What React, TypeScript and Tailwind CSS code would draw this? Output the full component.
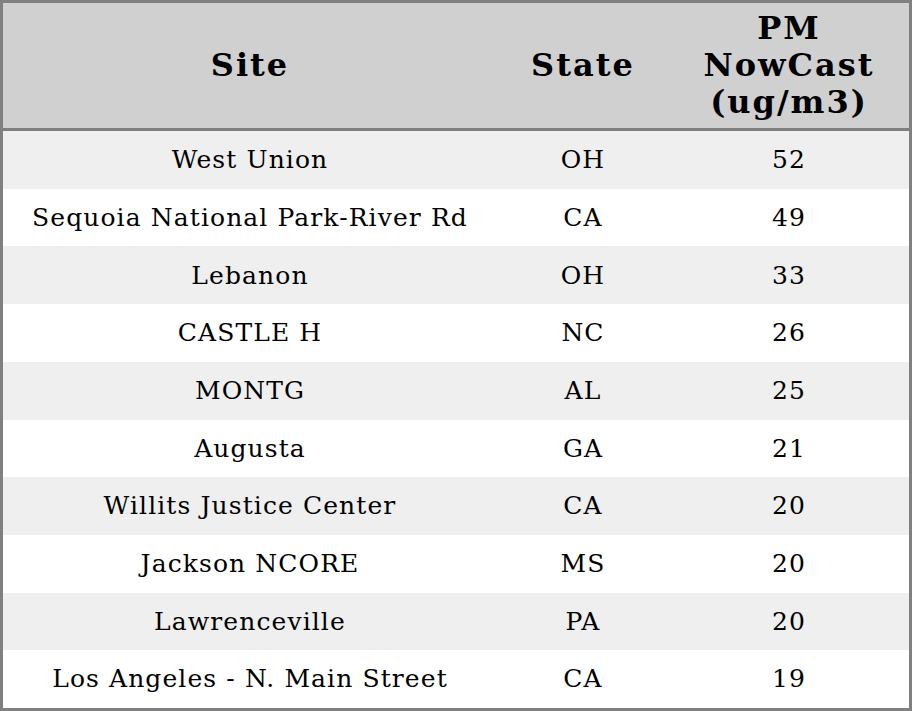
const rows: [string, string, string][] = [
  ['West Union', 'OH', '52'],
  ['Sequoia National Park-River Rd', 'CA', '49'],
  ['Lebanon', 'OH', '33'],
  ['CASTLE H', 'NC', '26'],
  ['MONTG', 'AL', '25'],
  ['Augusta', 'GA', '21'],
  ['Willits Justice Center', 'CA', '20'],
  ['Jackson NCORE', 'MS', '20'],
  ['Lawrenceville', 'PA', '20'],
  ['Los Angeles - N. Main Street', 'CA', '19'],
];

export default function App() {
  return (
    <div
      className="w-[912px] h-[711px] flex flex-col border-[3px] border-[#808080] bg-white text-black"
      style={{ fontFamily: '"DejaVu Serif", serif' }}
    >
      <div className="h-[128px] shrink-0 grid grid-cols-[494px_172px_1fr] items-center bg-[#d0d0d0] border-b-[3px] border-[#808080] text-[32px] font-bold leading-[37px] tracking-[2px] text-center">
        <div>Site</div>
        <div>State</div>
        <div>
          PM
          <br />
          NowCast
          <br />
          (ug/m3)
        </div>
      </div>
      {rows.map(([site, state, val], i) => (
        <div
          key={i}
          className={`flex-1 grid grid-cols-[494px_172px_1fr] items-center text-center text-[25px] tracking-[1.1px] ${
            i % 2 === 0 ? 'bg-[#efefef]' : 'bg-white'
          }`}
        >
          <div>{site}</div>
          <div>{state}</div>
          <div>{val}</div>
        </div>
      ))}
    </div>
  );
}
